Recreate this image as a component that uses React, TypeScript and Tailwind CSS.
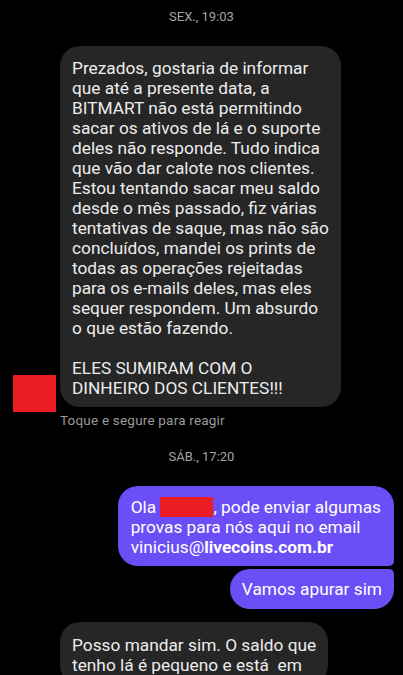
const FIRST_MESSAGE = [
    "Prezados, gostaria de informar",
    "que até a presente data, a",
    "BITMART não está permitindo",
    "sacar os ativos de lá e o suporte",
    "deles não responde. Tudo indica",
    "que vão dar calote nos clientes.",
    "Estou tentando sacar meu saldo",
    "desde o mês passado, fiz várias",
    "tentativas de saque, mas não são",
    "concluídos, mandei os prints de",
    "todas as operações rejeitadas",
    "para os e-mails deles, mas eles",
    "sequer respondem. Um absurdo",
    "o que estão fazendo.",
    "",
    "ELES SUMIRAM COM O",
    "DINHEIRO DOS CLIENTES!!!",
];

const LAST_MESSAGE = ["Posso mandar sim. O saldo que", "tenho lá é pequeno e está  em"];

function Lines({ lines }: { lines: string[] }) {
    return (
        <>
            {lines.map((line, i) => (
                <div key={i} className="whitespace-pre h-[20px]">
                    {line}
                </div>
            ))}
        </>
    );
}

function DateLabel({ children }: { children: string }) {
    return <div className="text-center text-[13px] leading-[16px] text-[#a3a3a3]">{children}</div>;
}

export default function App() {
    return (
        <div
            className="w-[403px] h-[675px] overflow-hidden bg-black flex flex-col"
            style={{ fontFamily: "Roboto, 'Noto Sans', sans-serif" }}
        >
            {/* Friday */}
            <div className="pt-[9px]">
                <DateLabel>SEX., 19:03</DateLabel>
            </div>

            <div className="mt-[21px] flex items-end pl-[13px] gap-[4px]">
                <div className="w-[43px] h-[37px] bg-[#ec1c24] mb-[-5px] shrink-0"></div>
                <div className="bg-[#262626] rounded-[20px] px-[12px] pt-[12px] pb-[9px] text-[17.3px] leading-[20px] text-[#ececec] w-fit">
                    <Lines lines={FIRST_MESSAGE} />
                </div>
            </div>
            <div className="mt-[5px] pl-[60px] text-[13.5px] leading-[16px] tracking-[0.2px] text-[#9a9a9a]">
                Toque e segure para reagir
            </div>

            {/* Saturday */}
            <div className="mt-[21px]">
                <DateLabel>SÁB., 17:20</DateLabel>
            </div>

            <div className="mt-[21px] flex flex-col items-end gap-[3px] pr-[9px] text-[17.3px] leading-[20px] text-white">
                <div className="bg-[#6b4ef6] rounded-[20px] rounded-br-[5px] px-[13px] pt-[11px] pb-[9px] w-fit">
                    <div className="whitespace-pre h-[20px] flex items-center">
                        Ola <span className="inline-block w-[53px] h-[20px] bg-[#ec1c24]"></span>, pode enviar algumas
                    </div>
                    <div className="whitespace-pre h-[20px]">provas para nós aqui no email</div>
                    <div className="whitespace-pre h-[20px]">
                        vinicius@<span className="font-bold">livecoins.com.br</span>
                    </div>
                </div>
                <div className="bg-[#6b4ef6] rounded-[20px] rounded-tr-[5px] px-[12px] py-[10px] w-fit">
                    Vamos apurar sim
                </div>
            </div>

            <div className="mt-[13px] pl-[60px]">
                <div className="bg-[#262626] rounded-[20px] px-[12px] pt-[13px] pb-[10px] text-[17.3px] leading-[20px] text-[#ececec] w-fit">
                    <Lines lines={LAST_MESSAGE} />
                </div>
            </div>
        </div>
    );
}
